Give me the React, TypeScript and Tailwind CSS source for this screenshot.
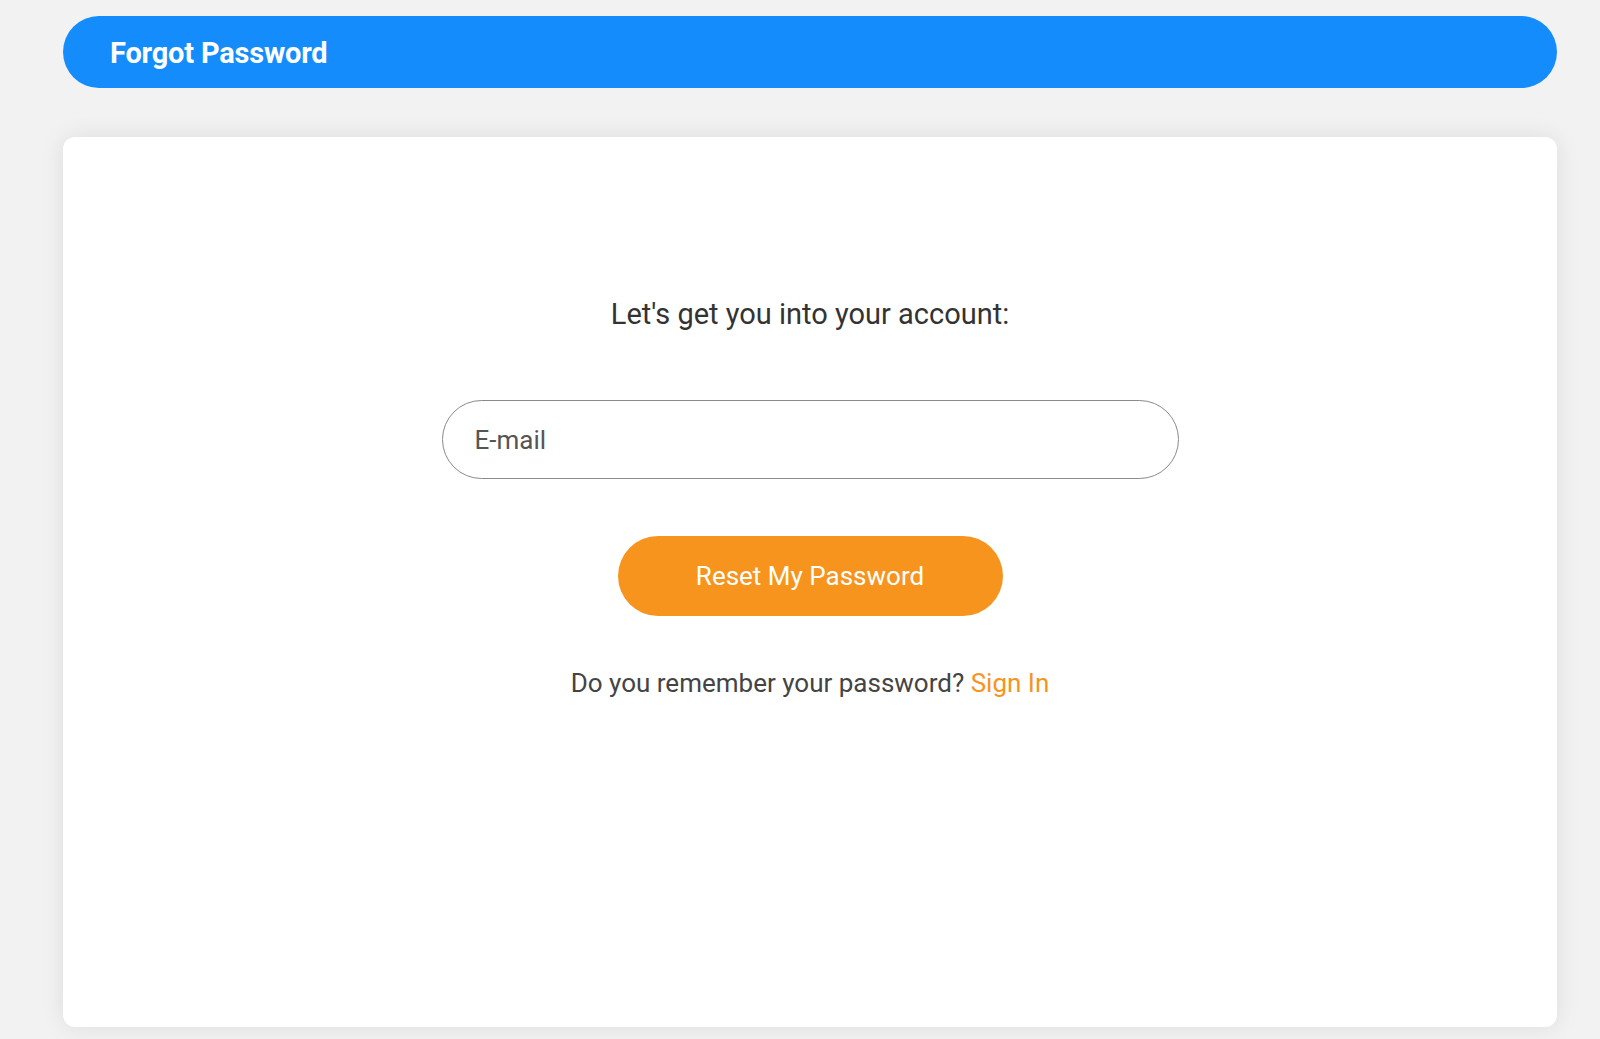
export default function App() {
  return (
    <div className="min-h-screen bg-[#f2f2f2] pl-[63px] pr-[43px] pt-4 pb-3 font-['Roboto',sans-serif]">
      {/* Header */}
      <div className="h-[72px] rounded-full bg-[#148cfb] flex items-center pl-[47px] pt-[3px]">
        <h1 className="text-[29px] font-bold text-white tracking-[-0.2px]">Forgot Password</h1>
      </div>

      {/* Card */}
      <div className="mt-[49px] h-[890px] bg-white rounded-[12px] shadow-[0_0_24px_rgba(0,0,0,0.09)] flex flex-col items-center pt-[159px]">
        <p className="text-[29px] leading-[36px] text-[#333]">Let's get you into your account:</p>

        <input
          type="email"
          placeholder="E-mail"
          className="mt-[68px] w-[737px] h-[79px] rounded-full border border-[#8a8a8a] px-8 text-[26px] text-[#333] placeholder:text-[#555] outline-none"
        />

        <button className="mt-[57px] w-[385px] h-[80px] rounded-full bg-[#f7941e] text-white text-[26px] font-normal">
          Reset My Password
        </button>

        <p className="mt-[53px] text-[26px] leading-[28px] text-[#444]">
          Do you remember your password? <a className="text-[#f7941e] cursor-pointer">Sign In</a>
        </p>
      </div>
    </div>
  );
}
